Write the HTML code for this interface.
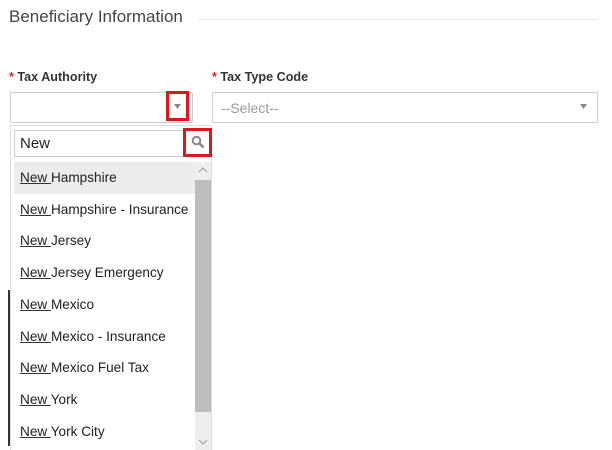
<!DOCTYPE html>
<html><head><style>
body{margin:0;width:612px;height:450px;background:#fff;font-family:"Liberation Sans",sans-serif;position:relative;overflow:hidden;color:#222}
.a{position:absolute}
.item{position:absolute;left:14px;width:181px;height:32px;line-height:32px;font-size:13.6px;color:#222;padding-left:6px;box-sizing:border-box;white-space:nowrap}
.item u{text-decoration:underline;text-decoration-color:#333}
</style></head><body>
<div class="a" style="left:9px;top:7px;font-size:17px;color:#444">Beneficiary Information</div>
<div class="a" style="left:198px;top:19px;width:400px;height:1px;background:#e8e8e8"></div>
<div class="a" style="left:9px;top:70px;font-size:12.6px;font-weight:bold;color:#333"><span style="color:#d22">*</span> Tax Authority</div>
<div class="a" style="left:212px;top:70px;font-size:12.6px;font-weight:bold;color:#333"><span style="color:#d22">*</span> Tax Type Code</div>
<div class="a" style="left:10px;top:92px;width:183px;height:31px;border:1px solid #ccc;box-sizing:border-box;border-radius:2px"></div>
<div class="a" style="left:212px;top:92px;width:386px;height:31px;border:1px solid #ccc;box-sizing:border-box;border-radius:2px"></div>
<div class="a" style="left:221px;top:100px;font-size:14px;color:#999">--Select--</div>
<svg class="a" style="left:580px;top:104px" width="7" height="6"><polygon points="0,0 7,0 3.5,5" fill="#888"/></svg>
<div class="a" style="left:166px;top:91px;width:23px;height:30px;border:3px solid #e0161c;box-sizing:border-box"></div>
<svg class="a" style="left:174px;top:104px" width="7" height="6"><polygon points="0,0 7,0 3.5,5" fill="#888"/></svg>
<div class="a" style="left:10px;top:125px;width:202px;height:325px;border:1px solid #ddd;border-bottom:none;box-sizing:border-box;background:#fff"></div>
<div class="a" style="left:8px;top:290px;width:2px;height:156px;background:#333"></div>
<div class="a" style="left:14px;top:130px;width:197px;height:27px;border:1px solid #ccc;box-sizing:border-box"></div>
<div class="a" style="left:20px;top:135px;font-size:15px;color:#222">New</div>
<div class="a" style="left:183px;top:128px;width:29px;height:29px;border:3px solid #e0161c;box-sizing:border-box"></div>
<svg class="a" style="left:191px;top:135px" width="14" height="14"><circle cx="5.5" cy="5.5" r="3.8" fill="none" stroke="#888" stroke-width="2"/><line x1="8.5" y1="8.5" x2="12.5" y2="12.5" stroke="#888" stroke-width="2.6"/></svg>
<div class="a" style="left:14px;top:162px;width:181px;height:32px;background:#ececec"></div>
<div class="a" style="left:195px;top:162px;width:16px;height:288px;background:#eee"></div>
<div class="a" style="left:195px;top:180px;width:16px;height:232px;background:#bdbdbd"></div>
<svg class="a" style="left:198px;top:166px" width="10" height="8"><polyline points="1,6 5,2 9,6" fill="none" stroke="#999" stroke-width="1"/></svg>
<svg class="a" style="left:198px;top:438px" width="10" height="8"><polyline points="1,2 5,6 9,2" fill="none" stroke="#999" stroke-width="1"/></svg>
<div class="item" style="top:162px"><u>New </u>Hampshire</div>
<div class="item" style="top:194px"><u>New </u>Hampshire - Insurance</div>
<div class="item" style="top:225px"><u>New </u>Jersey</div>
<div class="item" style="top:257px"><u>New </u>Jersey Emergency</div>
<div class="item" style="top:289px"><u>New </u>Mexico</div>
<div class="item" style="top:321px"><u>New </u>Mexico - Insurance</div>
<div class="item" style="top:352px"><u>New </u>Mexico Fuel Tax</div>
<div class="item" style="top:384px"><u>New </u>York</div>
<div class="item" style="top:416px"><u>New </u>York City</div>
</body></html>
